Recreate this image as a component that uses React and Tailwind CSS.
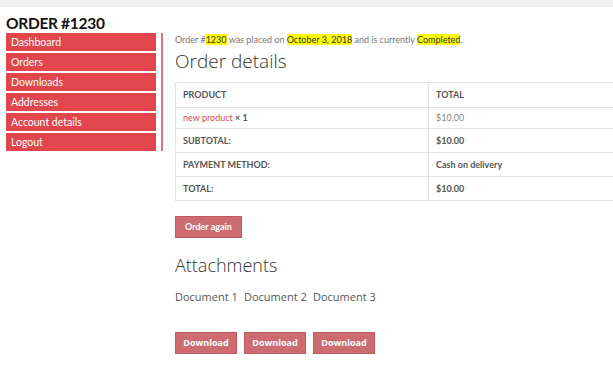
export default function App() {
  const nav = ["Dashboard", "Orders", "Downloads", "Addresses", "Account details", "Logout"];
  const rows = [
    { label: "SUBTOTAL:", value: "$10.00" },
    { label: "PAYMENT METHOD:", value: "Cash on delivery" },
    { label: "TOTAL:", value: "$10.00" },
  ];

  return (
    <div className="w-[613px] h-[370px] overflow-hidden bg-white font-['Lato',sans-serif]">
      <div className="h-[7px] bg-[#f1f1f1] border-b border-[#e8e8e8]" />
      <div className="pl-[6px]">
        <h1 className="mt-[6px] text-[15.5px] leading-[20px] font-bold tracking-[-0.3px] text-[#111]">ORDER #1230</h1>

        <div className="flex items-start">
          <div className="flex border-r-2 border-[#d9777b] pr-[5px]">
            <ul className="w-[150px] flex flex-col gap-[2px]">
              {nav.map((n) => (
                <li key={n} className="h-[18px] bg-[#e0464b] text-white text-[10.5px] leading-[18px] pl-[5px]">
                  {n}
                </li>
              ))}
            </ul>
          </div>

          <div className="ml-[12px] w-[460px] shrink-0">
            <p className="mt-0 text-[9px] leading-[14px] text-[#777]">
              Order #<mark className="bg-[#ffff00] text-[#333]">1230</mark> was placed on{" "}
              <mark className="bg-[#ffff00] text-[#333]">October 3, 2018</mark> and is currently{" "}
              <mark className="bg-[#ffff00] text-[#333]">Completed</mark>.
            </p>
            <h2 className="mt-[2px] text-[19px] leading-[24px] font-light text-[#333] font-['Open_Sans',sans-serif]">Order details</h2>

            <table className="mt-[9px] w-[460px] border-collapse text-[9px] text-[#555]">
              <tbody>
                <tr className="h-[25px]">
                  <td className="w-[253px] border border-[#e2e2e2] pl-[7px] font-bold">PRODUCT</td>
                  <td className="border border-[#e2e2e2] pl-[7px] font-bold">TOTAL</td>
                </tr>
                <tr className="h-[21px]">
                  <td className="border border-[#e2e2e2] pl-[7px]">
                    <span className="text-[#d9474b]">new product</span> <span className="font-bold">× 1</span>
                  </td>
                  <td className="border border-[#e2e2e2] pl-[7px] text-[#888]">$10.00</td>
                </tr>
                {rows.map((r) => (
                  <tr key={r.label} className="h-[24px]">
                    <td className="border border-[#e2e2e2] pl-[7px] font-bold">{r.label}</td>
                    <td className="border border-[#e2e2e2] pl-[7px] font-bold">{r.value}</td>
                  </tr>
                ))}
              </tbody>
            </table>

            <button className="mt-[15px] h-[22px] px-[9px] bg-[#cd6b71] border border-[#c2585e] text-white text-[9px] font-bold">
              Order again
            </button>

            <h2 className="mt-[15px] text-[18px] leading-[24px] font-light text-[#333] font-['Open_Sans',sans-serif]">Attachments</h2>

            <div className="mt-[12px] flex text-[11px] leading-[16px] text-[#555] font-['Open_Sans',sans-serif]">
              <span className="w-[69px]">Document 1</span>
              <span className="w-[69px]">Document 2</span>
              <span className="w-[69px]">Document 3</span>
            </div>

            <div className="mt-[27px] flex gap-[7px]">
              {[1, 2, 3].map((i) => (
                <button key={i} className="w-[62px] h-[22px] bg-[#cd6b71] border border-[#c2585e] text-white text-[9px] font-bold font-['Open_Sans',sans-serif]">
                  Download
                </button>
              ))}
            </div>
          </div>
        </div>
      </div>
    </div>
  );
}
